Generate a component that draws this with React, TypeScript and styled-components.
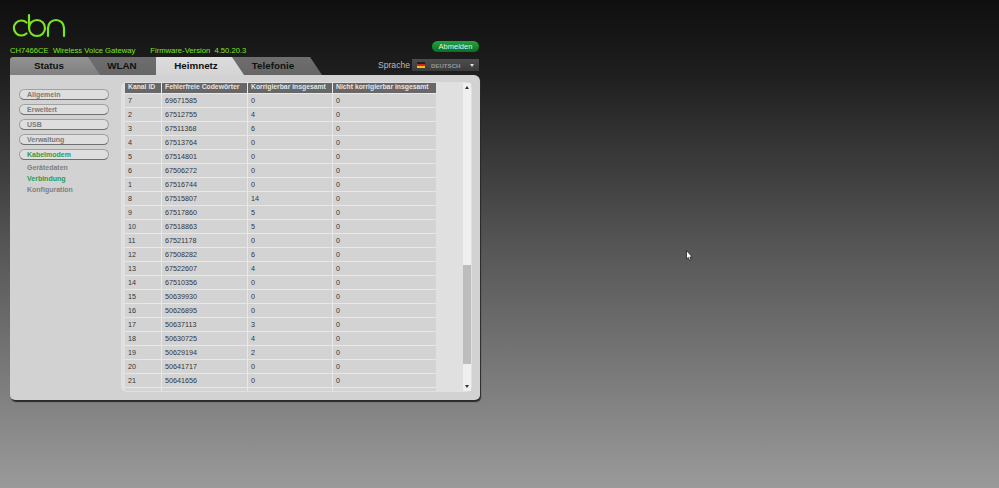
import React from "react";
import styled, { createGlobalStyle } from "styled-components";

const Global = createGlobalStyle`
  html, body { margin: 0; padding: 0; height: 100%; overflow: hidden; }
  body { background: linear-gradient(180deg, #0f0f0f 0%, #1e1e1e 15%, #555 50%, #9a9a9a 100%); font-family: "Liberation Sans", Arial, sans-serif; }
  #root { height: 100%; }
`;

const Page = styled.div`
  position: relative;
  width: 999px;
  height: 488px;
  padding: 13px 0 0 10px;
  box-sizing: border-box;
  overflow: hidden;
`;
const Frame = styled.div`
  width: 470px;
  display: flex;
  flex-direction: column;
`;
const Logo = styled.svg`
  display: block;
  width: 56px;
  height: 26px;
  margin-left: 1px;
`;
const InfoRow = styled.div`
  display: flex;
  align-items: center;
  justify-content: space-between;
  height: 12px;
  margin-top: 3px;
`;
const DeviceInfo = styled.div`
  display: flex;
  gap: 15px;
  color: #7ce51e;
  font-size: 7.65px;
  white-space: pre;
  margin-top: 4px;
`;
const LogoutButton = styled.div`
  width: 47px;
  height: 11px;
  border-radius: 6px;
  background: linear-gradient(180deg, #22a33f, #0c6f22);
  color: #e6f2e6;
  font-size: 7.5px;
  line-height: 11px;
  text-align: center;
  margin-right: 1px;
  margin-top: -3px;
`;
const NavRow = styled.div`
  display: flex;
  align-items: flex-end;
  justify-content: space-between;
  height: 20px;
  margin-top: 1px;
`;
const Tabs = styled.div`
  display: flex;
  height: 18px;
`;
const Tab = styled.div<{ $w: number; $state: "on" | "light" | "dark"; $z: number; $pl?: number }>`
  position: relative;
  z-index: ${(p) => p.$z};
  width: ${(p) => p.$w}px;
  margin-right: -12px;
  box-sizing: border-box;
  padding-right: 12px;
  padding-left: ${(p) => p.$pl ?? 0}px;
  height: 18px;
  line-height: 18px;
  text-align: center;
  font-size: 9.8px;
  font-weight: bold;
  color: #111;
  border-top-left-radius: ${(p) => (p.$z === 4 ? 3 : 0)}px;
  clip-path: polygon(0 0, calc(100% - 12px) 0, 100% 100%, 0 100%);
  background: ${(p) =>
    p.$state === "on"
      ? "linear-gradient(180deg,#dcdcdc,#d4d4d4)"
      : p.$state === "light"
      ? "linear-gradient(180deg,#929292,#808080)"
      : "linear-gradient(180deg,#6e6e6e,#666)"};
`;
const LangArea = styled.div`
  display: flex;
  align-items: center;
  gap: 2px;
  margin-right: 1px;
  margin-bottom: 4px;
  color: #b9b9b9;
  font-size: 8.6px;
`;
const LangSelect = styled.div`
  width: 67px;
  height: 12px;
  display: flex;
  align-items: center;
  box-sizing: border-box;
  padding: 0 5px;
  gap: 5px;
  background: linear-gradient(180deg, #4e4e4e, #3b3b3b);
  color: #999;
  font-size: 6.1px;
  font-weight: bold;
`;
const Flag = styled.svg`
  width: 8px;
  height: 6px;
  margin-right: 1px;
`;
const Caret = styled.span`
  margin-left: auto;
  border-left: 2.5px solid transparent;
  border-right: 2.5px solid transparent;
  border-top: 3px solid #ddd;
`;
const Panel = styled.div`
  height: 325px;
  box-sizing: border-box;
  display: flex;
  background: #d2d2d2;
  border-radius: 0 6px 5px 5px;
  box-shadow: 1px 2px 1px #2a2a2a;
  padding: 7px 8px 8px 0;
`;
const Sidebar = styled.div`
  width: 111px;
  flex: none;
  box-sizing: border-box;
  padding: 7px 0 0 9px;
  display: flex;
  flex-direction: column;
  gap: 4px;
`;
const Pill = styled.div<{ $on?: boolean }>`
  width: 90px;
  height: 11px;
  box-sizing: border-box;
  border: 1px solid #a0a0a0;
  border-bottom: 1.5px solid #6f6f6f;
  border-radius: 6px;
  background: #dedede;
  color: ${(p) => (p.$on ? "#2e9a55" : "#7a7a7a")};
  font-size: 7px;
  font-weight: bold;
  line-height: 9px;
  padding-left: 7px;
`;
const SubMenu = styled.div`
  display: flex;
  flex-direction: column;
  padding-left: 8px;
  margin-top: -2px;
`;
const SubItem = styled.div<{ $on?: boolean }>`
  height: 11px;
  line-height: 11px;
  font-size: 7px;
  font-weight: bold;
  color: ${(p) => (p.$on ? "#2e9a55" : "#808080")};
`;
const Content = styled.div`
  flex: 1;
  display: flex;
  background: #e0e0e0;
  border-radius: 6px;
  padding: 0 0 0 4px;
  min-width: 0;
`;
const TableClip = styled.div`
  width: 311px;
  overflow: hidden;
  flex: none;
  margin: 1px 0;
`;
const DataTable = styled.div`
  display: grid;
  grid-template-columns: 36px 85px 84px 103px;
  column-gap: 1px;
  row-gap: 1px;
  background: #e8e8e8;
  font-size: 7.2px;
  color: #333;
  margin-top: -3px;
`;
const HeadCell = styled.div`
  height: 13px;
  line-height: 14px;
  background: #676767;
  color: #e4e4e4;
  font-weight: bold;
  font-size: 6.8px;
  padding-left: 3px;
  white-space: nowrap;
  overflow: hidden;
`;
const Cell = styled.div`
  height: 13px;
  line-height: 13px;
  background: #d3d3d3;
  padding-left: 3px;
`;
const ScrollTrack = styled.div`
  position: relative;
  width: 8px;
  margin: 1px 0 1px 27px;
  background: #efefef;
  display: flex;
  flex-direction: column;
  align-items: center;
`;
const Arrow = styled.span<{ $up?: boolean }>`
  width: 0;
  height: 0;
  margin: 3px 0;
  border-left: 2.5px solid transparent;
  border-right: 2.5px solid transparent;
  ${(p) => (p.$up ? "border-bottom: 3px solid #333;" : "border-top: 3px solid #333;")}
`;
const ThumbSpace = styled.div`
  flex: 1;
  width: 100%;
  padding-top: 173px;
  box-sizing: border-box;
`;
const Thumb = styled.div`
  height: 99px;
  background: #bdbdbd;
`;
const Cursor = styled.svg`
  position: absolute;
  left: 686px;
  top: 250px;
  width: 7px;
  height: 11px;
`;

const rows: [number, number, number][] = [
  [7, 69671585, 0], [2, 67512755, 4], [3, 67511368, 6], [4, 67513764, 0], [5, 67514801, 0],
  [6, 67506272, 0], [1, 67516744, 0], [8, 67515807, 14], [9, 67517860, 5], [10, 67518863, 5],
  [11, 67521178, 0], [12, 67508282, 6], [13, 67522607, 4], [14, 67510356, 0], [15, 50639930, 0],
  [16, 50626895, 0], [17, 50637113, 3], [18, 50630725, 4], [19, 50629194, 2], [20, 50641717, 0],
  [21, 50641656, 0],
];

export default function App() {
  return (
    <Page>
      <Global />
      <Frame>
        <Logo viewBox="0 0 56 26" fill="none" stroke="#7be61f" strokeWidth="2.2" strokeLinecap="round">
          <path d="M15.5 9.5 A7.5 7.5 0 1 0 15.5 20.5" />
          <path d="M18 2 V15 A8 8 0 1 0 34 15 A8 8 0 1 0 18 15" />
          <path d="M37 23 V15 A8 8 0 0 1 53 15 V23" />
        </Logo>
        <InfoRow>
          <DeviceInfo>
            <span>CH7466CE  Wireless Voice Gateway</span>
            <span>Firmware-Version  4.50.20.3</span>
          </DeviceInfo>
          <LogoutButton>Abmelden</LogoutButton>
        </InfoRow>
        <NavRow>
          <Tabs>
            <Tab $w={90} $state="light" $z={4}>Status</Tab>
            <Tab $w={80} $state="dark" $z={3}>WLAN</Tab>
            <Tab $w={88} $state="on" $z={5} $pl={4}>Heimnetz</Tab>
            <Tab $w={90} $state="dark" $z={2} $pl={4}>Telefonie</Tab>
          </Tabs>
          <LangArea>
            Sprache
            <LangSelect>
              <Flag viewBox="0 0 8 6">
                <rect width="8" height="2" fill="#222" />
                <rect y="2" width="8" height="2" fill="#c9281e" />
                <rect y="4" width="8" height="2" fill="#eec120" />
              </Flag>
              DEUTSCH
              <Caret />
            </LangSelect>
          </LangArea>
        </NavRow>
        <Panel>
          <Sidebar>
            <Pill>Allgemein</Pill>
            <Pill>Erweitert</Pill>
            <Pill>USB</Pill>
            <Pill>Verwaltung</Pill>
            <Pill $on>Kabelmodem</Pill>
            <SubMenu>
              <SubItem>Gerätedaten</SubItem>
              <SubItem $on>Verbindung</SubItem>
              <SubItem>Konfiguration</SubItem>
            </SubMenu>
          </Sidebar>
          <Content>
            <TableClip>
              <DataTable>
                <HeadCell>Kanal ID</HeadCell>
                <HeadCell>Fehlerfreie Codewörter</HeadCell>
                <HeadCell>Korrigierbar insgesamt</HeadCell>
                <HeadCell>Nicht korrigierbar insgesamt</HeadCell>
                {rows.map((r) => (
                  <React.Fragment key={r[0]}>
                    <Cell>{r[0]}</Cell>
                    <Cell>{r[1]}</Cell>
                    <Cell>{r[2]}</Cell>
                    <Cell>0</Cell>
                  </React.Fragment>
                ))}
                <Cell />
                <Cell />
                <Cell />
                <Cell />
              </DataTable>
            </TableClip>
            <ScrollTrack>
              <Arrow $up />
              <ThumbSpace><Thumb /></ThumbSpace>
              <Arrow />
            </ScrollTrack>
          </Content>
        </Panel>
      </Frame>
      <Cursor viewBox="0 0 7 11">
        <path d="M0.5 0.5 L0.5 9 L2.3 7.4 L3.5 10.3 L5 9.6 L3.8 7 L6.3 7 Z" fill="#fff" stroke="#222" strokeWidth="0.8" />
      </Cursor>
    </Page>
  );
}
